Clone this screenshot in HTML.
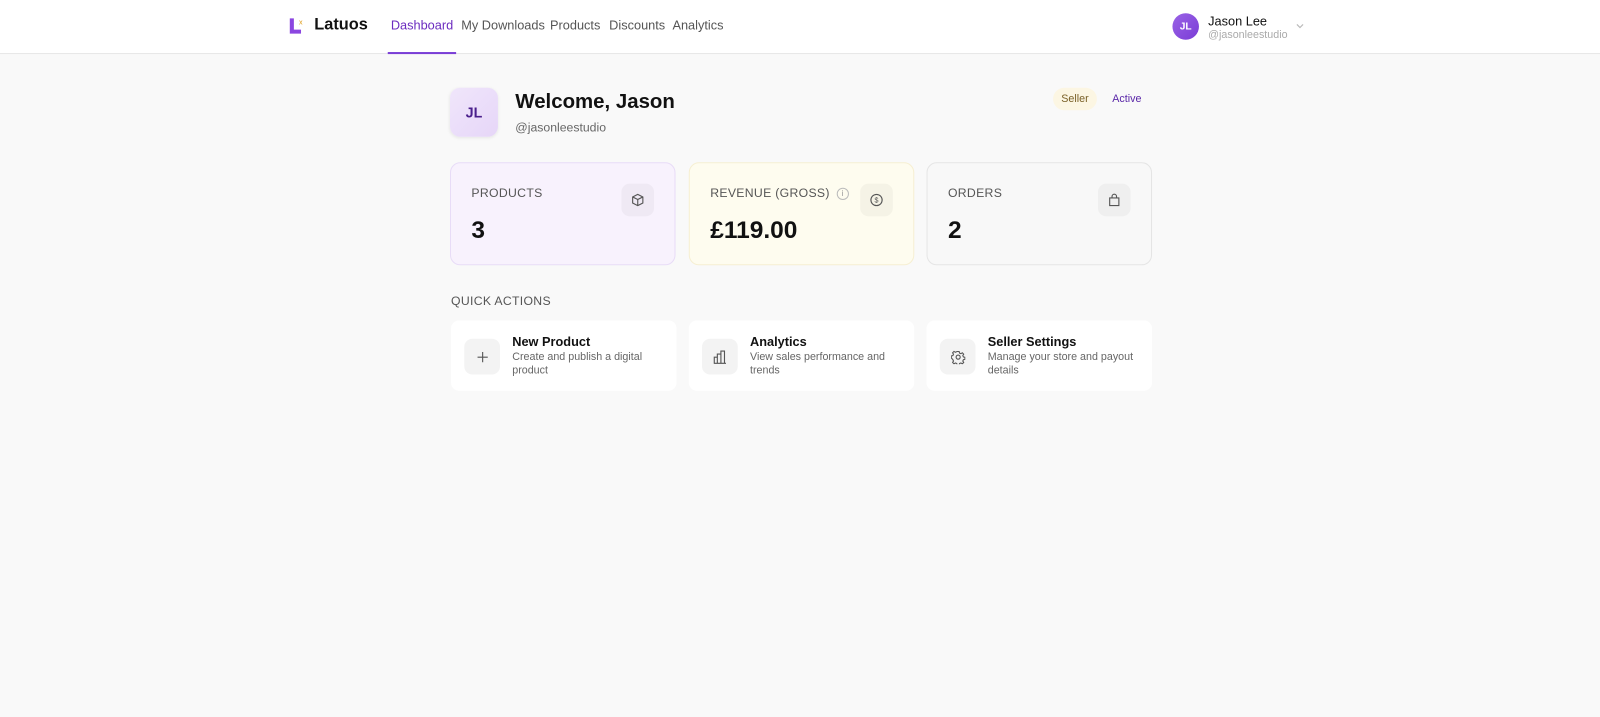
<!DOCTYPE html>
<html><head><style>
*{box-sizing:border-box;margin:0;padding:0}
body{width:1600px;height:717px;background:#f9f9f9;font-family:"Liberation Sans",sans-serif;color:#111;position:relative;overflow:hidden}
#w{position:absolute;left:0;top:0;width:1568px;height:703px;transform:scale(1.0204);transform-origin:0 0}
.hdr{position:absolute;left:0;top:0;width:1568px;height:53px;background:#fff;border-bottom:1px solid #e6e6e6}
.abs{position:absolute}
.nav{font-size:12.5px;color:#555;top:18px}
.card{position:absolute;top:159px;width:221px;height:101px;border-radius:10px;border:1px solid #e5e5e5}
.card .lbl{position:absolute;left:20px;top:22px;font-size:12px;color:#555;letter-spacing:.3px}
.card .val{position:absolute;left:20px;top:52px;font-size:24px;font-weight:bold;color:#111}
.card .ic{position:absolute;right:20px;top:20px;width:32px;height:32px;border-radius:8px;background:rgba(0,0,0,.035);display:flex;align-items:center;justify-content:center}
.qa{position:absolute;top:314px;width:221px;height:69px;background:#fff;border-radius:8px}
.qa .ic{position:absolute;left:13px;top:18px;width:35px;height:35px;border-radius:8px;background:#f3f3f3;display:flex;align-items:center;justify-content:center}
.qa .t{position:absolute;left:60px;top:14px;font-size:12.5px;font-weight:bold;color:#111}
.qa .d{position:absolute;left:60px;top:30px;font-size:10.5px;color:#666;line-height:13px;width:155px}
</style></head><body><div id="w">
<div class="hdr">
 <svg class="abs" style="left:283px;top:17px" width="16" height="17" viewBox="0 0 16 17"><path d="M1 1h4v11h7v4H1z" fill="#8b46e0"/><text x="10" y="7" font-size="7" fill="#e0a020" font-family="Liberation Sans">x</text></svg>
 <div class="abs" style="left:308px;top:16px;font-size:16px;font-weight:bold">Latuos</div>
 <div class="abs nav" style="left:383px;color:#6b2bbf">Dashboard</div>
 <div class="abs" style="left:380px;top:51px;width:67px;height:2px;background:#7a3fd6"></div>
 <div class="abs nav" style="left:452px">My Downloads</div>
 <div class="abs nav" style="left:539px">Products</div>
 <div class="abs nav" style="left:597px">Discounts</div>
 <div class="abs nav" style="left:659px">Analytics</div>
 <div class="abs" style="left:1149px;top:13px;width:26px;height:26px;border-radius:50%;background:linear-gradient(135deg,#9a63e6,#7a3cd6);color:#fff;font-size:10px;font-weight:bold;display:flex;align-items:center;justify-content:center">JL</div>
 <div class="abs" style="left:1184px;top:14px;font-size:12.5px">Jason Lee</div>
 <div class="abs" style="left:1184px;top:28px;font-size:10.5px;color:#aaa">@jasonleestudio</div>
 <svg class="abs" style="left:1269px;top:22px" width="10" height="7" viewBox="0 0 10 7"><path d="M2 2l3 3 3-3" fill="none" stroke="#bbb" stroke-width="1.2"/></svg>
</div>
<div class="abs" style="left:441px;top:86px;width:47px;height:48px;border-radius:10px;background:linear-gradient(135deg,#f0e6fb,#e6d6f8);box-shadow:0 1px 3px rgba(0,0,0,.08);color:#4a1f8c;font-size:14px;font-weight:bold;display:flex;align-items:center;justify-content:center">JL</div>
<div class="abs" style="left:505px;top:89px;font-size:20px;font-weight:bold">Welcome, Jason</div>
<div class="abs" style="left:505px;top:118px;font-size:12px;color:#666">@jasonleestudio</div>
<div class="abs" style="left:1032px;top:86px;width:43px;height:22px;border-radius:11px;background:#fcf6e3;color:#7a6128;font-size:10.5px;display:flex;align-items:center;justify-content:center">Seller</div>
<div class="abs" style="left:1090px;top:91px;font-size:10.5px;color:#5a27a8">Active</div>

<div class="card" style="left:441px;background:#f8f2fd;border-color:#e8dcf7"><div class="lbl">PRODUCTS</div><div class="val">3</div>
 <div class="ic"><svg width="14" height="14" viewBox="0 0 14 14" fill="none" stroke="#555" stroke-width="1.1"><path d="M7 1.5l5 2.5v6L7 12.5 2 10V4z M2 4l5 2.5L12 4 M7 6.5v6"/></svg></div></div>
<div class="card" style="left:675px;background:#fefcef;border-color:#f6efd2"><div class="lbl">REVENUE (GROSS) <span style="display:inline-block;width:12px;height:12px;border:1px solid #bbb;border-radius:50%;font-size:8px;text-align:center;line-height:10px;color:#999;vertical-align:1px;margin-left:3px">i</span></div><div class="val">£119.00</div>
 <div class="ic"><svg width="14" height="14" viewBox="0 0 14 14" fill="none" stroke="#555" stroke-width="1.1"><circle cx="7" cy="7" r="5.5"/><text x="7" y="9.5" font-size="7" text-anchor="middle" fill="#555" stroke="none" font-family="Liberation Sans">$</text></svg></div></div>
<div class="card" style="left:908px;background:#f8f8f8"><div class="lbl">ORDERS</div><div class="val">2</div>
 <div class="ic"><svg width="14" height="14" viewBox="0 0 14 14" fill="none" stroke="#555" stroke-width="1.1"><path d="M2.5 5h9v7.5h-9z M4.8 5V3.5a2.2 2.2 0 0 1 4.4 0V5"/></svg></div></div>

<div class="abs" style="left:442px;top:288px;font-size:12px;color:#555;letter-spacing:.3px">QUICK ACTIONS</div>
<div class="qa" style="left:442px"><div class="ic"><svg width="12" height="12" viewBox="0 0 12 12" stroke="#555" stroke-width="1.1"><path d="M6 1v10M1 6h10"/></svg></div><div class="t">New Product</div><div class="d">Create and publish a digital product</div></div>
<div class="qa" style="left:675px"><div class="ic"><svg width="16" height="16" viewBox="0 0 16 16" fill="none" stroke="#555" stroke-width="1.1"><path d="M2 14V8h3v6 M5 14V5h3.5v9 M8.5 14V2h3.5v12 M1.5 14h12"/></svg></div><div class="t">Analytics</div><div class="d">View sales performance and trends</div></div>
<div class="qa" style="left:908px"><div class="ic"><svg width="14" height="14" viewBox="0 0 14 14" fill="none" stroke="#555" stroke-width="1.1"><circle cx="7" cy="7" r="2"/><path d="M6 1.5h2l.4 1.6 1.4.6 1.4-.9 1.4 1.4-.9 1.4.6 1.4 1.6.4v2l-1.6.4-.6 1.4.9 1.4-1.4 1.4-1.4-.9-1.4.6-.4 1.6H6l-.4-1.6-1.4-.6-1.4.9-1.4-1.4.9-1.4-.6-1.4L.1 8V6l1.6-.4.6-1.4-.9-1.4 1.4-1.4 1.4.9 1.4-.6z" transform="translate(.2 0) scale(.97)"/></svg></div><div class="t">Seller Settings</div><div class="d">Manage your store and payout details</div></div>
</div></body></html>
